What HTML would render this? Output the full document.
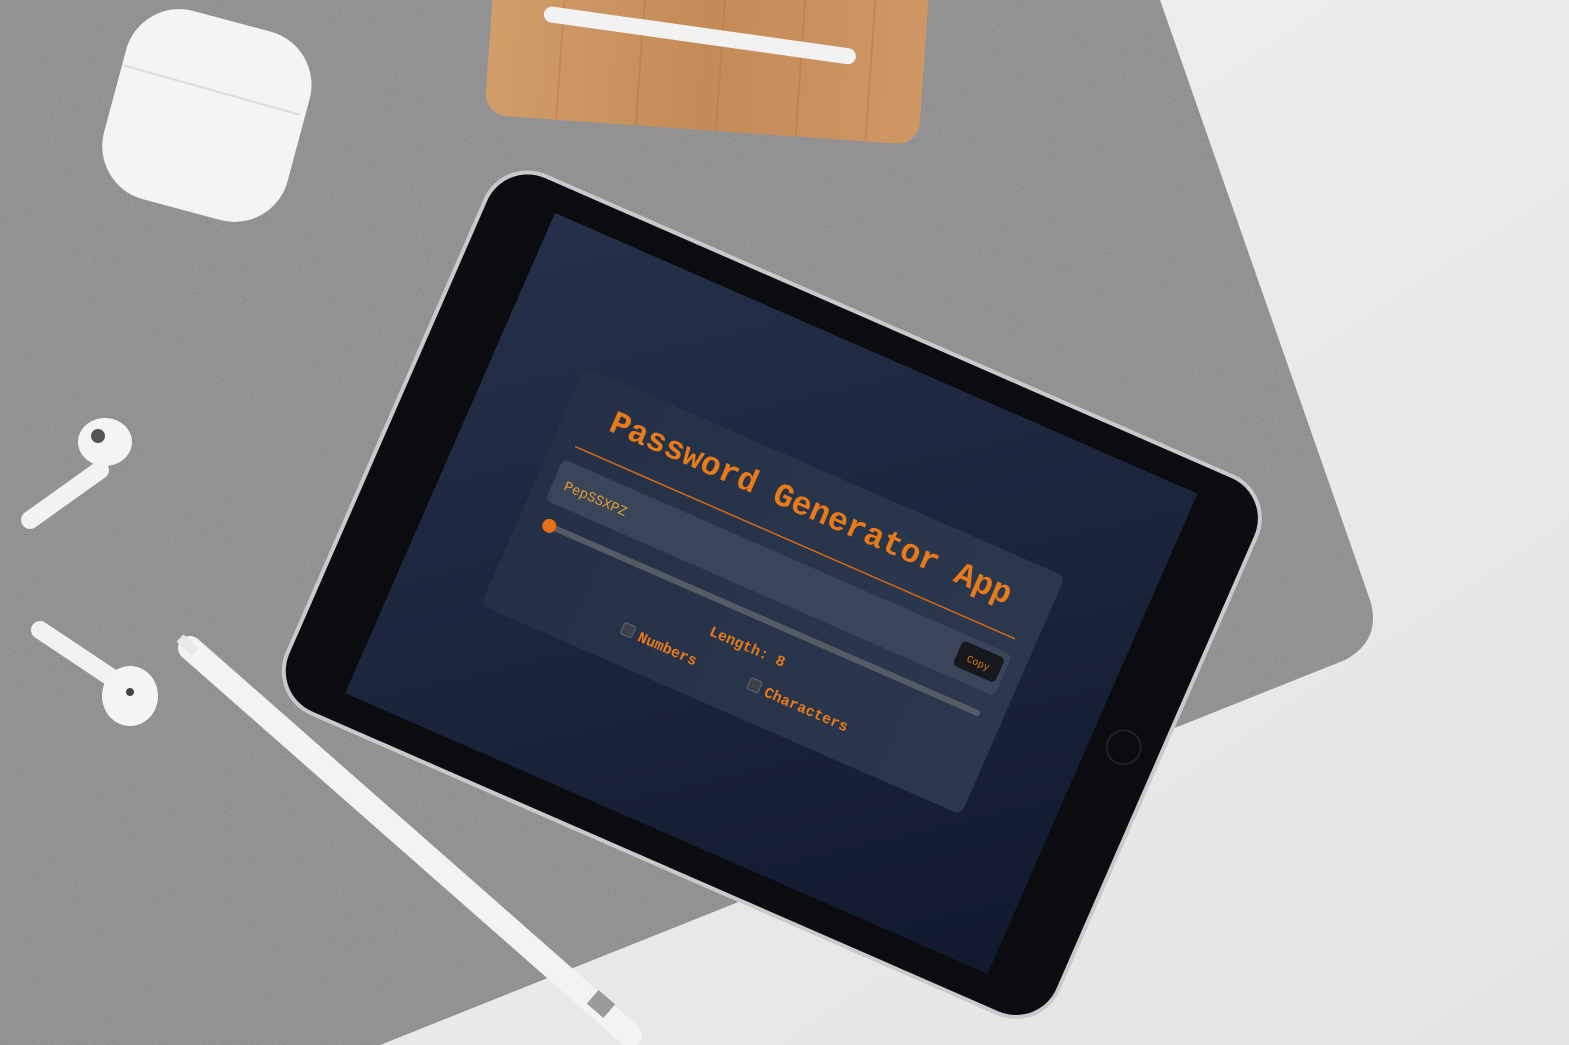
<!DOCTYPE html>
<html><head><meta charset="utf-8"><style>
html,body{margin:0;padding:0;width:1569px;height:1045px;overflow:hidden;background:#e9e9e9}
svg{display:block}
text{font-family:"Liberation Mono",monospace}
</style></head><body>
<svg width="1569" height="1045" viewBox="0 0 1569 1045" xmlns="http://www.w3.org/2000/svg">
<defs>
<linearGradient id="bgw" x1="0" y1="0" x2="1" y2="1"><stop offset="0" stop-color="#f1f1f1"/><stop offset="1" stop-color="#e4e4e4"/></linearGradient>
<linearGradient id="scr" x1="0" y1="0" x2="1" y2="1"><stop offset="0" stop-color="#25304a"/><stop offset="1" stop-color="#111a2e"/></linearGradient>
<linearGradient id="card" x1="0" y1="0" x2="1" y2="0"><stop offset="0" stop-color="#243046"/><stop offset="1" stop-color="#2c384d"/></linearGradient>
<linearGradient id="wood" x1="0" y1="0" x2="1" y2="0"><stop offset="0" stop-color="#d29d6a"/><stop offset="0.5" stop-color="#c48b58"/><stop offset="1" stop-color="#cf9764"/></linearGradient>
<filter id="noise"><feTurbulence type="fractalNoise" baseFrequency="0.9" numOctaves="2" result="n"/><feColorMatrix type="saturate" values="0"/><feComponentTransfer><feFuncA type="linear" slope="0.4"/></feComponentTransfer><feComposite in2="SourceGraphic" operator="in"/></filter>
</defs>
<rect width="1569" height="1045" fill="url(#bgw)"/>
<path d="M0 0 L1160 0 L1370 600 Q1382 640 1345 660 L380 1045 L0 1045 Z" fill="#88888a"/>
<path d="M0 0 L1160 0 L1370 600 Q1382 640 1345 660 L380 1045 L0 1045 Z" fill="#fff" filter="url(#noise)"/>
<g transform="rotate(4 705 70)">
<rect x="488" y="-30" width="435" height="160" rx="22" fill="url(#wood)"/>
<g stroke="#b07545" stroke-width="2" opacity="0.4"><line x1="560" y1="-30" x2="560" y2="130"/><line x1="640" y1="-30" x2="640" y2="130"/><line x1="720" y1="-30" x2="720" y2="130"/><line x1="800" y1="-30" x2="800" y2="130"/><line x1="870" y1="-30" x2="870" y2="130"/></g>
<rect x="540" y="28" width="315" height="16" rx="8" fill="#f2f2f2" transform="rotate(4 700 36)"/>
</g>
<rect x="112" y="18" width="190" height="195" rx="55" fill="#f4f4f4" transform="rotate(15 207 115)"/>
<path d="M122 70 L300 110" stroke="#dcdcdc" stroke-width="2" transform="rotate(3 207 115)"/>
<path d="M30 520 L100 470" stroke="#f2f2f2" stroke-width="18" stroke-linecap="round"/>
<ellipse cx="105" cy="442" rx="27" ry="24" fill="#f4f4f4"/>
<circle cx="98" cy="436" r="7" fill="#555"/>
<path d="M40 630 L115 680" stroke="#f2f2f2" stroke-width="18" stroke-linecap="round"/>
<ellipse cx="130" cy="696" rx="28" ry="30" fill="#f4f4f4"/>
<circle cx="130" cy="692" r="4" fill="#444"/>
<g transform="translate(555 213) rotate(23.6)">
<rect x="-71" y="-32" width="845" height="590" rx="48" fill="#c9cacc"/>
<rect x="-67" y="-28" width="837" height="582" rx="44" fill="#0b0c0f"/>
<circle cx="735" cy="262" r="17" fill="none" stroke="#222" stroke-width="2"/>
<rect x="0" y="0" width="701" height="524" fill="url(#scr)"/>
<rect x="89" y="129" width="524" height="260" rx="8" fill="url(#card)"/>
<text x="135" y="178" font-size="33" font-weight="bold" fill="#e87a1a">Password Generator App</text>
<line x1="112" y1="206" x2="592" y2="206" stroke="#d56a16" stroke-width="1.5"/>
<rect x="106" y="222" width="490" height="45" rx="6" fill="#3a4559"/>
<text x="118" y="250" font-size="14" fill="#e0a030">PepSSXPZ</text>
<rect x="545" y="228" width="46" height="27" rx="5" fill="#16181c"/>
<text x="568" y="246" font-size="10" fill="#e07a20" text-anchor="middle">Copy</text>
<rect x="119" y="286" width="471" height="6" rx="3" fill="#555c66"/>
<rect x="113" y="282" width="14" height="14" rx="7" fill="#e8701a"/>
<text x="350" y="325" font-size="15" font-weight="bold" fill="#e87a1a" text-anchor="middle">Length: 8</text>
<rect x="228" y="347" width="12" height="12" rx="2" fill="#3c4048" stroke="#666"/>
<text x="246" y="359" font-size="15" font-weight="bold" fill="#e87a1a">Numbers</text>
<rect x="366" y="347" width="12" height="12" rx="2" fill="#3c4048" stroke="#666"/>
<text x="384" y="359" font-size="15" font-weight="bold" fill="#e87a1a">Characters</text>
</g>
<path d="M190 648 L630 1035" stroke="#f3f3f3" stroke-width="24" stroke-linecap="round"/>
<path d="M180 638 L195 652" stroke="#e8e8e8" stroke-width="10"/>
<rect x="590" y="995" width="22" height="18" fill="#9a9a9a" transform="rotate(41 601 1004)"/>
</svg>
</body></html>
